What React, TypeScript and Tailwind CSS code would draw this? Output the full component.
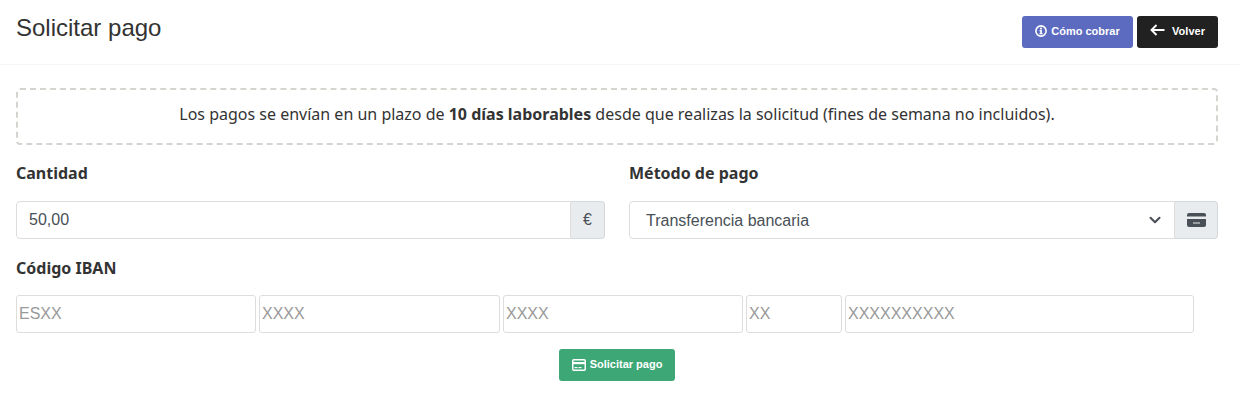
import React from "react";
import { ChevronDown } from "lucide-react";

const sans = "font-['Liberation_Sans',Arial,sans-serif]";
const noto = "font-['Noto_Sans',sans-serif]";

const InfoIcon = () => (
  <svg width="12" height="12" viewBox="0 0 12 12" fill="none">
    <circle cx="6" cy="6" r="5.1" stroke="currentColor" strokeWidth="1.6" />
    <circle cx="6" cy="3.6" r="1.1" fill="currentColor" />
    <path d="M4.5 5.1H6.9V8H7.6V9.3H4.5V8H5.2V6.3H4.5Z" fill="currentColor" />
  </svg>
);

const BackIcon = () => (
  <svg width="15" height="12" viewBox="0 0 15 12" fill="none" stroke="currentColor" strokeWidth="1.9" className="-mt-[2px]">
    <path d="M14.5 6H1.5M6.5 1L1.5 6L6.5 11" />
  </svg>
);

// filled card in the select addon
const SolidCard = () => (
  <svg width="19" height="14" viewBox="0 0 19 14" className="text-[#495057]">
    <path d="M2 0H17A2 2 0 0 1 19 2V3.5H0V2A2 2 0 0 1 2 0Z" fill="currentColor" />
    <path d="M0 6H19V12A2 2 0 0 1 17 14H2A2 2 0 0 1 0 12Z" fill="currentColor" />
    <rect x="6" y="9.5" width="7" height="1" fill="#e9ecef" />
  </svg>
);

// outlined card on the green button
const OutlineCard = () => (
  <svg width="14" height="12" viewBox="0 0 14 12" fill="none">
    <rect x="0.75" y="0.75" width="12.5" height="10.5" rx="1" stroke="currentColor" strokeWidth="1.5" />
    <rect x="1" y="3" width="12" height="2.2" fill="currentColor" />
    <rect x="2.5" y="8" width="3" height="1.2" fill="currentColor" />
    <rect x="6.5" y="8" width="3" height="1.2" fill="currentColor" />
  </svg>
);

const ibanParts = [
  { placeholder: "ESXX", width: "w-[240px]" },
  { placeholder: "XXXX", width: "w-[241px]" },
  { placeholder: "XXXX", width: "w-[240px]" },
  { placeholder: "XX", width: "w-[96px]" },
  { placeholder: "XXXXXXXXXX", width: "w-[349px]" },
];

export default function App() {
  return (
    <div className={`min-h-[405px] w-full bg-white text-[#333333] ${sans}`}>
      <header className="flex h-[65px] items-start justify-between border-b border-[#f5f5f3] pt-4 pr-[22px] pl-4">
        <h1 className="text-[24px] leading-[24px]">Solicitar pago</h1>
        <div className="flex gap-1">
          <button className="flex h-8 w-[111px] items-center justify-center gap-1 rounded-[3px] bg-[#5c6bc0] pb-[2px] text-[11px] font-bold text-white">
            <InfoIcon />
            Cómo cobrar
          </button>
          <button className="flex h-8 w-[81px] items-center justify-center gap-[7px] rounded-[3px] bg-[#212121] pb-[2px] text-[11px] font-bold text-white">
            <BackIcon />
            Volver
          </button>
        </div>
      </header>

      <main className="pt-[23px] pr-[22px] pl-4">
        <div className={`flex h-[57px] items-center justify-center rounded border-2 border-dashed border-[#d5d5d0] pb-[6px] text-[16px] ${noto}`}>
          <p>
            Los pagos se envían en un plazo de <strong>10 días laborables</strong> desde que realizas la solicitud (fines de semana no incluidos).
          </p>
        </div>

        <div className="mt-[17px] grid grid-cols-2 gap-x-6">
          <div>
            <label className={`block h-[22px] text-[16px] leading-[22px] font-bold ${noto}`}>Cantidad</label>
            <div className="mt-[17px] flex h-[38px]">
              <input
                defaultValue="50,00"
                className="h-full min-w-0 flex-1 rounded-l border border-[#dddddd] px-3 text-[16px] text-[#495057] outline-none"
              />
              <span className="flex w-[34px] items-center justify-center rounded-r border border-l-0 border-[#d5d8da] bg-[#e9ecef] text-[16px] text-[#495057]">
                €
              </span>
            </div>
          </div>
          <div>
            <label className={`block h-[22px] text-[16px] leading-[22px] font-bold ${noto}`}>Método de pago</label>
            <div className="mt-[17px] flex h-[38px]">
              <div className="flex h-full min-w-0 flex-1 items-center justify-between rounded-l border border-[#dddddd] pt-[2px] pr-[10px] pl-4 text-[16px] text-[#495057]">
                <span>Transferencia bancaria</span>
                <ChevronDown size={18} strokeWidth={2.8} className="-mt-[2px] text-[#4a5056]" />
              </div>
              <span className="flex w-[43px] items-center justify-center rounded-r border border-l-0 border-[#d5d8da] bg-[#e9ecef]">
                <SolidCard />
              </span>
            </div>
          </div>
        </div>

        <label className={`mt-[18px] block h-[22px] text-[16px] leading-[22px] font-bold ${noto}`}>Código IBAN</label>

        <div className="mt-[16px] flex gap-[3px]">
          {ibanParts.map((part, i) => (
            <input
              key={i}
              placeholder={part.placeholder}
              className={`h-[38px] ${part.width} rounded-[3px] border border-[#dddddd] px-[2px] text-[16px] outline-none placeholder:text-[#999999]`}
            />
          ))}
        </div>

        <div className="mt-4 flex justify-center">
          <button className="flex h-8 w-[116px] items-center justify-center gap-1 rounded-[3px] bg-[#3da876] pb-[1px] text-[11px] font-bold text-white">
            <OutlineCard />
            Solicitar pago
          </button>
        </div>
      </main>
    </div>
  );
}
